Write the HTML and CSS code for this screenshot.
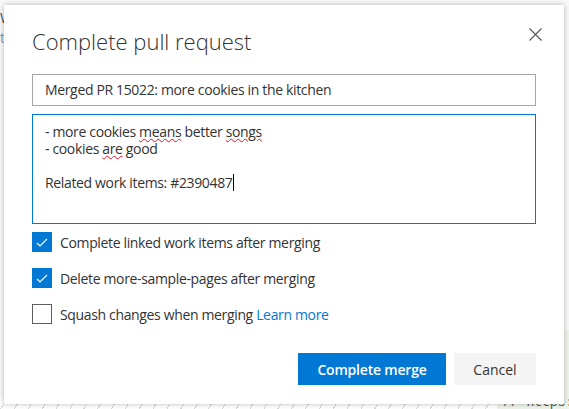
FILE: index.html
```html
<!DOCTYPE html>
<html>
<head>
<meta charset="utf-8">
<link rel="stylesheet" href="styles.css">
</head>
<body>
<div class="page">
  <div class="page-top">
    <span class="frag frag-w">W</span>
    <span class="frag frag-t">t</span>
  </div>
  <div class="page-main">
    <div class="page-left"></div>
    <div class="page-right"><span class="frag-code">g</span></div>
  </div>
  <div class="page-bottom">
    <div class="hatch"></div>
    <div class="code-strip">// https:</div>
  </div>

  <div class="dialog">
    <div class="dialog-head">
      <h1 class="title">Complete pull request</h1>
      <button class="close" aria-label="Close">
        <svg width="13" height="13" viewBox="0 0 13 13"><path d="M0.5 0.5 L12.5 12.5 M12.5 0.5 L0.5 12.5" stroke="#555" stroke-width="1.1" fill="none"/></svg>
      </button>
    </div>
    <div class="field">Merged PR 15022: more cookies in the kitchen</div>
    <div class="textarea">
      <div class="line">- more cookies <span class="sq">means</span> better <span class="sq">songs</span></div>
      <div class="line">- cookies <span class="sq">are</span> good</div>
      <div class="line">&nbsp;</div>
      <div class="line">Related work items: #2390487<span class="caret"></span></div>
    </div>
    <div class="options">
      <label class="opt">
        <span class="box checked"><svg width="20" height="20" viewBox="0 0 20 20"><path d="M5 11 L8 14 L15 7" stroke="#fff" stroke-width="1.2" fill="none"/></svg></span>
        <span class="opt-text">Complete linked work items after merging</span>
      </label>
      <label class="opt">
        <span class="box checked"><svg width="20" height="20" viewBox="0 0 20 20"><path d="M5 11 L8 14 L15 7" stroke="#fff" stroke-width="1.2" fill="none"/></svg></span>
        <span class="opt-text">Delete more-sample-pages after merging</span>
      </label>
      <label class="opt">
        <span class="box"></span>
        <span class="opt-text">Squash changes when merging <a class="link">Learn more</a></span>
      </label>
    </div>
    <div class="actions">
      <button class="btn primary">Complete merge</button>
      <button class="btn secondary">Cancel</button>
    </div>
  </div>
</div>
</body>
</html>
```
FILE: styles.css
```css
* { box-sizing: border-box; }
html, body { margin: 0; padding: 0; }
body {
  font-family: "Open Sans", "Noto Sans", "Liberation Sans", sans-serif;
  color: #333;
  background: #f8f8f8;
}
.page {
  position: relative;
  width: 569px;
  height: 409px;
  overflow: hidden;
  display: flex;
  flex-direction: column;
  background: #f8f8f8;
}
.page-top {
  height: 330px;
  position: relative;
}
.frag { position: absolute; left: 0; font-size: 14px; color: #456; }
.frag-w { top: 8px; }
.frag-t { top: 28px; color: #89a; }
.page-main {
  flex: 1;
  display: flex;
}
.page-left { flex: 1; }
.page-right {
  width: 16px;
  background: #eef4ec;
  font-size: 14px;
  color: #666;
  padding-top: 32px;
  padding-left: 2px;
}
.page-bottom {
  height: 12px;
  display: flex;
}
.hatch {
  flex: 1;
  background: repeating-linear-gradient(120deg, #fff 0 6px, #d8d8d8 6px 7px, #fff 7px 12px);
}
.code-strip {
  width: 72px;
  background: #eef4ec;
  font-family: "Liberation Mono", monospace;
  font-size: 13px;
  color: #555;
  padding-left: 6px;
  line-height: 12px;
  white-space: nowrap;
}

.dialog {
  position: absolute;
  left: 4px;
  top: 5px;
  width: 560px;
  height: 399px;
  background: #fff;
  box-shadow: 0 0 5px rgba(0,0,0,0.28);
  padding: 0 28px;
  display: flex;
  flex-direction: column;
}
.dialog-head {
  display: flex;
  justify-content: space-between;
  align-items: flex-start;
  height: 69px;
}
.title {
  margin: 21px 0 0 0;
  font-size: 22px;
  font-weight: 300;
  line-height: 30px;
  color: #333;
}
.close {
  margin: 23px -6px 0 0;
  padding: 0;
  border: 0;
  background: none;
  width: 13px;
  height: 13px;
}
.close svg { display: block; }
.field {
  height: 32px;
  border: 1px solid #a6a6a6;
  font-size: 14px;
  letter-spacing: -0.35px;
  line-height: 30px;
  padding-left: 12px;
  color: #333;
}
.textarea {
  margin-top: 8px;
  height: 110px;
  border: 1px solid #0078d4;
  padding: 8px 12px;
  font-size: 14px;
  letter-spacing: -0.35px;
  line-height: 17px;
  color: #333;
}
.line { height: 17px; }
.sq {
  text-decoration: underline wavy #e81123;
  text-decoration-thickness: 1px;
  text-underline-offset: 1px;
}
.caret {
  display: inline-block;
  width: 1px;
  height: 17px;
  background: #000;
  vertical-align: -3px;
  margin-left: 1px;
}
.options {
  margin-top: 8px;
  display: flex;
  flex-direction: column;
  gap: 16px;
}
.opt {
  display: flex;
  align-items: center;
  gap: 8px;
  height: 20px;
  font-size: 14px;
  letter-spacing: -0.35px;
}
.box {
  width: 20px;
  height: 20px;
  border: 1px solid #605e5c;
  flex: none;
}
.box.checked {
  background: #0078d4;
  border-color: #0078d4;
}
.box svg { display: block; margin: -1px; }
.link { color: #0078d4; }
.actions {
  margin-top: 29px;
  display: flex;
  justify-content: flex-end;
  gap: 8px;
}
.btn {
  height: 32px;
  border: 0;
  font-family: inherit;
  font-size: 14px;
  padding: 0;
  white-space: nowrap;
}
.primary {
  width: 148px;
  background: #0078d4;
  color: #fff;
  font-weight: 600;
  letter-spacing: -0.2px;
}
.secondary {
  width: 82px;
  background: #f4f4f4;
  color: #333;
}
```
